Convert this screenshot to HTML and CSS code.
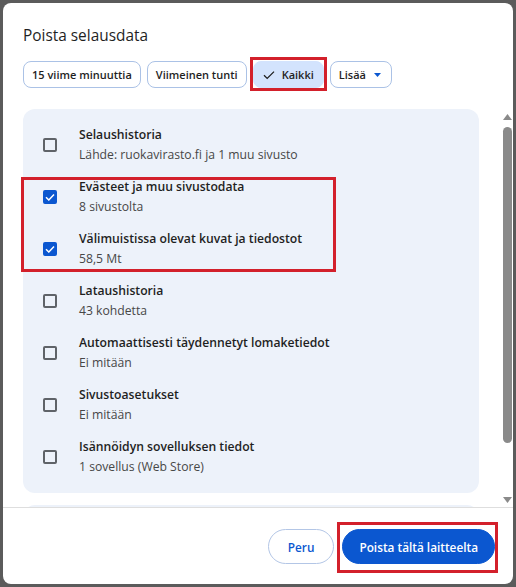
FILE: index.html
```html
<!DOCTYPE html>
<html lang="fi">
<head>
<meta charset="utf-8">
<title>Poista selausdata</title>
<link rel="stylesheet" href="styles.css">
</head>
<body>
<div class="dialog">
  <h1 class="title">Poista selausdata</h1>
  <div class="chips">
    <button class="chip">15 viime minuuttia</button>
    <button class="chip">Viimeinen tunti</button>
    <button class="chip chip--selected marked marked--chip">
      <svg class="chip-check" width="12" height="10" viewBox="0 0 12 10"><path d="M1 5.2 L4.2 8.4 L11 1.6" fill="none" stroke="#1f1f1f" stroke-width="1.3"/></svg>
      Kaikki
    </button>
    <button class="chip">Lisää
      <svg class="chip-caret" width="7" height="4" viewBox="0 0 7 4"><path d="M0 0 H7 L3.5 4 Z" fill="#0b57d0"/></svg>
    </button>
  </div>
  <div class="scroll">
    <div class="scroll-content">
      <div class="card">
        <div class="row">
          <span class="cb"></span>
          <div class="row-text"><div class="row-title">Selaushistoria</div><div class="row-sub">Lähde: ruokavirasto.fi ja 1 muu sivusto</div></div>
        </div>
        <div class="group marked marked--rows">
          <div class="row">
            <span class="cb cb--checked"><svg width="10" height="8" viewBox="0 0 10 8"><path d="M1 4.2 L3.8 7 L9 1.6" fill="none" stroke="#fff" stroke-width="1.5"/></svg></span>
            <div class="row-text"><div class="row-title">Evästeet ja muu sivustodata</div><div class="row-sub">8 sivustolta</div></div>
          </div>
          <div class="row">
            <span class="cb cb--checked"><svg width="10" height="8" viewBox="0 0 10 8"><path d="M1 4.2 L3.8 7 L9 1.6" fill="none" stroke="#fff" stroke-width="1.5"/></svg></span>
            <div class="row-text"><div class="row-title">Välimuistissa olevat kuvat ja tiedostot</div><div class="row-sub">58,5 Mt</div></div>
          </div>
        </div>
        <div class="row">
          <span class="cb"></span>
          <div class="row-text"><div class="row-title">Lataushistoria</div><div class="row-sub">43 kohdetta</div></div>
        </div>
        <div class="row">
          <span class="cb"></span>
          <div class="row-text"><div class="row-title">Automaattisesti täydennetyt lomaketiedot</div><div class="row-sub">Ei mitään</div></div>
        </div>
        <div class="row">
          <span class="cb"></span>
          <div class="row-text"><div class="row-title">Sivustoasetukset</div><div class="row-sub">Ei mitään</div></div>
        </div>
        <div class="row">
          <span class="cb"></span>
          <div class="row-text"><div class="row-title">Isännöidyn sovelluksen tiedot</div><div class="row-sub">1 sovellus (Web Store)</div></div>
        </div>
      </div>
      <div class="card card--next"></div>
    </div>
    <div class="scrollbar">
      <svg class="sb-arrow" width="9" height="6" viewBox="0 0 9 6"><path d="M4.5 0 L9 6 H0 Z" fill="#8a8a8a"/></svg>
      <span class="sb-thumb"></span>
      <span class="sb-spacer"></span>
      <svg class="sb-arrow" width="9" height="6" viewBox="0 0 9 6"><path d="M0 0 H9 L4.5 6 Z" fill="#8a8a8a"/></svg>
    </div>
  </div>
  <div class="footer">
    <button class="btn btn--outline">Peru</button>
    <button class="btn btn--primary marked marked--btn">Poista tältä laitteelta</button>
  </div>
</div>
</body>
</html>
```
FILE: styles.css
```css
* { box-sizing: border-box; }

html, body {
  margin: 0;
  padding: 0;
}

body {
  width: 516px;
  height: 587px;
  background: #5b5b5b;
  font-family: "Open Sans", "Noto Sans", "Liberation Sans", sans-serif;
  color: #1f1f1f;
  padding: 3px 3px 3px 3px;
  overflow: hidden;
}

.dialog {
  width: 510px;
  height: 581px;
  background: #ffffff;
  border-radius: 8px;
  display: flex;
  flex-direction: column;
  overflow: hidden;
}

.title {
  margin: 0;
  padding: 21px 0 0 20px;
  font-size: 15.4px;
  font-weight: 400;
  line-height: 24px;
  color: #1f1f1f;
}

.chips {
  display: flex;
  gap: 6px;
  margin-top: 13px;
  padding-left: 20px;
}

.chip {
  position: relative;
  display: inline-flex;
  align-items: center;
  height: 27px;
  padding: 0 8px;
  border: 1px solid #abc2e6;
  border-radius: 8px;
  background: #ffffff;
  font-family: inherit;
  font-size: 11px;
  font-weight: 600;
  color: #1f1f1f;
  white-space: nowrap;
}

.chip--selected {
  background: #d3e3fd;
  border-color: #d3e3fd;
  padding: 0 9px 0 9px;
}

.chip-check {
  margin-right: 7px;
}

.chip-caret {
  margin-left: 8px;
  margin-right: 2px;
}

.marked::after {
  content: "";
  position: absolute;
  border: 3px solid #d3202b;
  pointer-events: none;
}

.marked--chip::after {
  top: -5px;
  bottom: -4px;
  left: -4px;
  right: -4px;
}

.scroll {
  display: flex;
  height: 407px;
  margin-top: 12px;
  flex: none;
}

.scroll-content {
  flex: 1;
  padding: 9px 22px 0 20px;
  overflow: hidden;
}

.card {
  background: #edf2fa;
  border-radius: 12px;
  padding: 10px 0;
}

.card--next {
  margin-top: 12px;
  height: 80px;
}

.group {
  position: relative;
}

.marked--rows::after {
  top: 6px;
  bottom: 3px;
  left: -2px;
  width: 309px;
}

.row {
  display: flex;
  align-items: center;
  padding: 6px 0 6px 20px;
}

.cb {
  flex: none;
  width: 14px;
  height: 14px;
  border: 2px solid #5f6368;
  border-radius: 2px;
  margin-right: 22px;
  display: flex;
  align-items: center;
  justify-content: center;
}

.cb--checked {
  background: #0b57d0;
  border-color: #0b57d0;
}

.row-title {
  font-size: 12.2px;
  font-weight: 600;
  line-height: 20px;
  color: #1f1f1f;
}

.row-sub {
  font-size: 12.2px;
  line-height: 20px;
  color: #474747;
}

.scrollbar {
  width: 12px;
  flex: none;
  display: flex;
  flex-direction: column;
  align-items: flex-start;
  padding: 14px 0 4px 2px;
}

.sb-arrow {
  display: block;
  flex: none;
}

.sb-thumb {
  display: block;
  width: 9px;
  height: 316px;
  margin-top: 7px;
  background: #8a8a8a;
  border-radius: 4.5px;
}

.sb-spacer {
  flex: 1;
}

.footer {
  border-top: 1px solid #dedede;
  flex: 1;
  display: flex;
  justify-content: flex-end;
  align-items: flex-start;
  gap: 8px;
  padding: 21px 18px 0 0;
}

.btn {
  position: relative;
  height: 35px;
  border-radius: 18px;
  font-family: inherit;
  font-size: 11.8px;
  font-weight: 600;
  white-space: nowrap;
}

.btn--outline {
  background: #ffffff;
  border: 1px solid #b3c6e6;
  color: #0b57d0;
  padding: 0 19px;
}

.btn--primary {
  background: #0b57d0;
  border: 1px solid #0b57d0;
  color: #ffffff;
  padding: 0 16px;
}

.marked--btn::after {
  top: -8px;
  bottom: -10px;
  left: -6px;
  right: -4px;
}
```
